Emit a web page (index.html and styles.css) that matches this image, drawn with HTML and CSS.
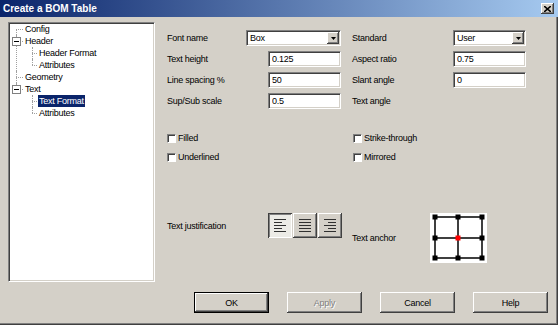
FILE: index.html
```html
<!DOCTYPE html>
<html lang="en">
<head>
    <meta charset="UTF-8">
    <title>Create a BOM Table</title>
    <link rel="stylesheet" href="styles.css">
</head>
<body>
<div class="window">
    <div class="titlebar">
        <span>Create a BOM Table</span>
        <span class="close">
            <svg width="7" height="6" viewBox="0 0 7 6"><path d="M0 0 L7 6 M7 0 L0 6" stroke="#000" stroke-width="1.6"/></svg>
        </span>
    </div>

    <div class="content">
        <!-- page tree -->
        <div class="tree-box">
            <ul class="tree">
                <li><span class="node">Config</span></li>
                <li class="open"><span class="toggle"></span><span class="node">Header</span>
                    <ul>
                        <li><span class="node">Header Format</span></li>
                        <li><span class="node">Attributes</span></li>
                    </ul>
                </li>
                <li><span class="node">Geometry</span></li>
                <li class="open"><span class="toggle"></span><span class="node">Text</span>
                    <ul>
                        <li><span class="node selected">Text Format</span></li>
                        <li><span class="node">Attributes</span></li>
                    </ul>
                </li>
            </ul>
        </div>

        <div class="panel">
            <div class="fields">
                <span>Font name</span>
                <div class="combo wide"><span>Box</span><span class="drop"><svg width="5" height="3" viewBox="0 0 5 3"><path d="M0 0 H5 L2.5 3 Z" fill="#000"/></svg></span></div>
                <span class="right-label">Standard</span>
                <div class="combo"><span>User</span><span class="drop"><svg width="5" height="3" viewBox="0 0 5 3"><path d="M0 0 H5 L2.5 3 Z" fill="#000"/></svg></span></div>

                <span>Text height</span>
                <input class="edit" value="0.125">
                <span class="right-label">Aspect ratio</span>
                <input class="edit" value="0.75">

                <span>Line spacing %</span>
                <input class="edit" value="50">
                <span class="right-label">Slant angle</span>
                <input class="edit" value="0">

                <span>Sup/Sub scale</span>
                <input class="edit" value="0.5">
                <span class="right-label">Text angle</span>
                <span></span>
            </div>

            <div class="checks">
                <label class="check"><span class="box"></span>Filled</label>
                <label class="check"><span class="box"></span>Strike-through</label>
                <label class="check"><span class="box"></span>Underlined</label>
                <label class="check"><span class="box"></span>Mirrored</label>
            </div>

            <div class="layout-row">
                <div class="justify">
                    <span class="justify-label">Text justification</span>
                    <button class="tool pressed">
                        <svg width="12" height="13" viewBox="0 0 12 13"><g fill="#303030"><rect y="0" width="12" height="1"/><rect y="3" width="8" height="1"/><rect y="6" width="12" height="1"/><rect y="9" width="8" height="1"/><rect y="12" width="12" height="1"/></g></svg>
                    </button>
                    <button class="tool">
                        <svg width="12" height="13" viewBox="0 0 12 13"><g fill="#303030"><rect y="0" width="12" height="1"/><rect y="3" width="12" height="1"/><rect y="6" width="12" height="1"/><rect y="9" width="12" height="1"/><rect y="12" width="12" height="1"/></g></svg>
                    </button>
                    <button class="tool">
                        <svg width="12" height="13" viewBox="0 0 12 13"><g fill="#303030"><rect y="0" width="12" height="1"/><rect x="4" y="3" width="8" height="1"/><rect y="6" width="12" height="1"/><rect x="4" y="9" width="8" height="1"/><rect y="12" width="12" height="1"/></g></svg>
                    </button>
                </div>
                <div class="anchor">
                    <span class="anchor-label">Text anchor</span>
                    <svg class="anchor-box" width="57" height="50" viewBox="0 0 57 50">
                        <rect width="57" height="50" fill="#fff"/>
                        <g stroke="#000" stroke-width="1.5">
                            <path d="M5 4 H52 M5 25 H52 M5 45 H52 M5 4 V45 M28 4 V45 M52 4 V45"/>
                        </g>
                        <g fill="#000">
                            <rect x="2.5" y="1.5" width="5" height="5"/><rect x="25.5" y="1.5" width="5" height="5"/><rect x="49.5" y="1.5" width="5" height="5"/>
                            <rect x="2.5" y="22.5" width="5" height="5"/><rect x="49.5" y="22.5" width="5" height="5"/>
                            <rect x="2.5" y="42.5" width="5" height="5"/><rect x="25.5" y="42.5" width="5" height="5"/><rect x="49.5" y="42.5" width="5" height="5"/>
                        </g>
                        <rect x="25.5" y="22.5" width="5" height="5" fill="#f00"/>
                    </svg>
                </div>
            </div>
        </div>
    </div>

    <div class="footer">
        <button class="btn default">OK</button>
        <button class="btn" disabled>Apply</button>
        <button class="btn">Cancel</button>
        <button class="btn">Help</button>
    </div>
</div>
</body>
</html>
```

FILE: styles.css
```css
body {
    margin: 0;
    font-family: "Liberation Sans", Arial, sans-serif;
    font-size: 9px;
    letter-spacing: -0.25px;
    color: #000;
}

.window {
    width: 558px;
    height: 325px;
    background: #d4d0c8;
    box-shadow: inset -1px -1px #404040, inset -2px -2px #808080;
    overflow: hidden;
}

/* title bar */
.titlebar {
    height: 17px;
    background: linear-gradient(to right, #0a246a, #a6caf0);
    display: flex;
    align-items: center;
    justify-content: space-between;
    padding: 0 4px 0 3px;
    color: #fff;
    font-weight: bold;
    font-size: 10px;
    letter-spacing: 0;
}

.close {
    width: 13px;
    height: 11px;
    background: #d4d0c8;
    box-shadow: inset -1px -1px #404040, inset 1px 1px #fff, inset -2px -2px #808080;
    display: flex;
    align-items: center;
    justify-content: center;
}

.content {
    display: flex;
    padding: 5px 0 0 8px;
}

/* tree */
.tree-box {
    width: 147px;
    height: 260px;
    box-sizing: border-box;
    background: #fff;
    border: 1px solid;
    border-color: #808080 #fff #fff #808080;
    box-shadow: inset 1px 1px #404040, inset -1px -1px #d4d0c8;
    padding: 0 0 0 1px;
}

.tree, .tree ul {
    list-style: none;
    margin: 0;
    padding: 0;
}

.tree li {
    position: relative;
    padding-left: 14px;
    line-height: 12px;
}

.tree li::before {
    content: "";
    position: absolute;
    left: 6px;
    top: 0;
    bottom: 0;
    border-left: 1px dotted #a0a0a0;
}

.tree > li:first-child::before {
    top: 6px;
}

.tree li:last-child::before {
    bottom: auto;
    height: 6px;
}

.tree li::after {
    content: "";
    position: absolute;
    left: 6px;
    top: 6px;
    width: 7px;
    border-top: 1px dotted #a0a0a0;
}

.tree ul li::before,
.tree ul li::after {
    left: 8px;
}

.tree ul li::after {
    width: 5px;
}

.toggle {
    position: absolute;
    left: 2px;
    top: 2px;
    width: 9px;
    height: 9px;
    box-sizing: border-box;
    border: 1px solid #808080;
    background: #fff;
    z-index: 1;
}

.toggle::after {
    content: "";
    position: absolute;
    left: 1px;
    top: 3px;
    width: 5px;
    height: 1px;
    background: #000;
}

.node {
    padding: 0 1px;
    display: inline-block;
    height: 12px;
}

.node.selected {
    background: #0a246a;
    color: #fff;
}

/* right panel */
.panel {
    padding: 8px 0 0 12px;
}

.fields {
    display: grid;
    grid-template-columns: 79px 95px 112px 73px;
    grid-auto-rows: 16px;
    row-gap: 5px;
    align-items: center;
}

.right-label {
    padding-left: 11px;
}

.edit,
.combo {
    box-sizing: border-box;
    height: 16px;
    width: 73px;
    justify-self: end;
    background: #fff;
    border: 1px solid;
    border-color: #808080 #fff #fff #808080;
    box-shadow: inset 1px 1px #404040, inset -1px -1px #d4d0c8;
    font-family: inherit;
    font-size: 9px;
    letter-spacing: inherit;
    padding: 0 2px 0 3px;
    margin: 0;
    outline: none;
}

.combo {
    display: flex;
    align-items: center;
    justify-content: space-between;
    padding: 0 1px 0 3px;
}

.combo.wide {
    width: 95px;
}

.drop {
    width: 12px;
    height: 12px;
    box-sizing: border-box;
    background: #d4d0c8;
    box-shadow: inset -1px -1px #404040, inset 1px 1px #fff, inset -2px -2px #808080;
    display: flex;
    align-items: center;
    justify-content: center;
}

/* checkboxes */
.checks {
    margin-top: 24px;
    display: grid;
    grid-template-columns: 186px auto;
    grid-auto-rows: 10px;
    row-gap: 9px;
}

.check {
    display: flex;
    align-items: center;
    gap: 2px;
}

.check .box {
    width: 9px;
    height: 9px;
    box-sizing: border-box;
    background: #fff;
    border: 1px solid;
    border-color: #808080 #fff #fff #808080;
    box-shadow: inset 1px 1px #404040;
}

/* justification and anchor */
.layout-row {
    margin-top: 51px;
    display: flex;
    align-items: flex-start;
}

.justify {
    width: 185px;
    display: flex;
    align-items: center;
    gap: 1px;
}

.justify-label {
    width: 100px;
}

.tool {
    width: 24px;
    height: 25px;
    padding: 0;
    border: none;
    background: #d4d0c8;
    box-shadow: inset -1px -1px #404040, inset 1px 1px #fff, inset -2px -2px #808080;
    display: flex;
    align-items: center;
    justify-content: center;
}

.tool.pressed {
    background: #ecebe6;
    box-shadow: inset 1px 1px #404040, inset -1px -1px #fff, inset 2px 2px #808080;
}

.anchor {
    display: flex;
    align-items: center;
}

.anchor-label {
    width: 78px;
}

.anchor-box {
    display: block;
}

/* footer buttons */
.footer {
    display: flex;
    justify-content: flex-end;
    gap: 18px;
    padding: 10px 10px 0 0;
}

.btn {
    width: 75px;
    height: 21px;
    box-sizing: border-box;
    border: none;
    background: #d4d0c8;
    font-family: inherit;
    font-size: 9px;
    letter-spacing: inherit;
    color: #000;
    box-shadow: inset -1px -1px #404040, inset 1px 1px #fff, inset -2px -2px #808080;
    padding: 0;
}

.btn.default {
    border: 1px solid #000;
}

.btn:disabled {
    color: #808080;
    text-shadow: 1px 1px #fff;
}
```
